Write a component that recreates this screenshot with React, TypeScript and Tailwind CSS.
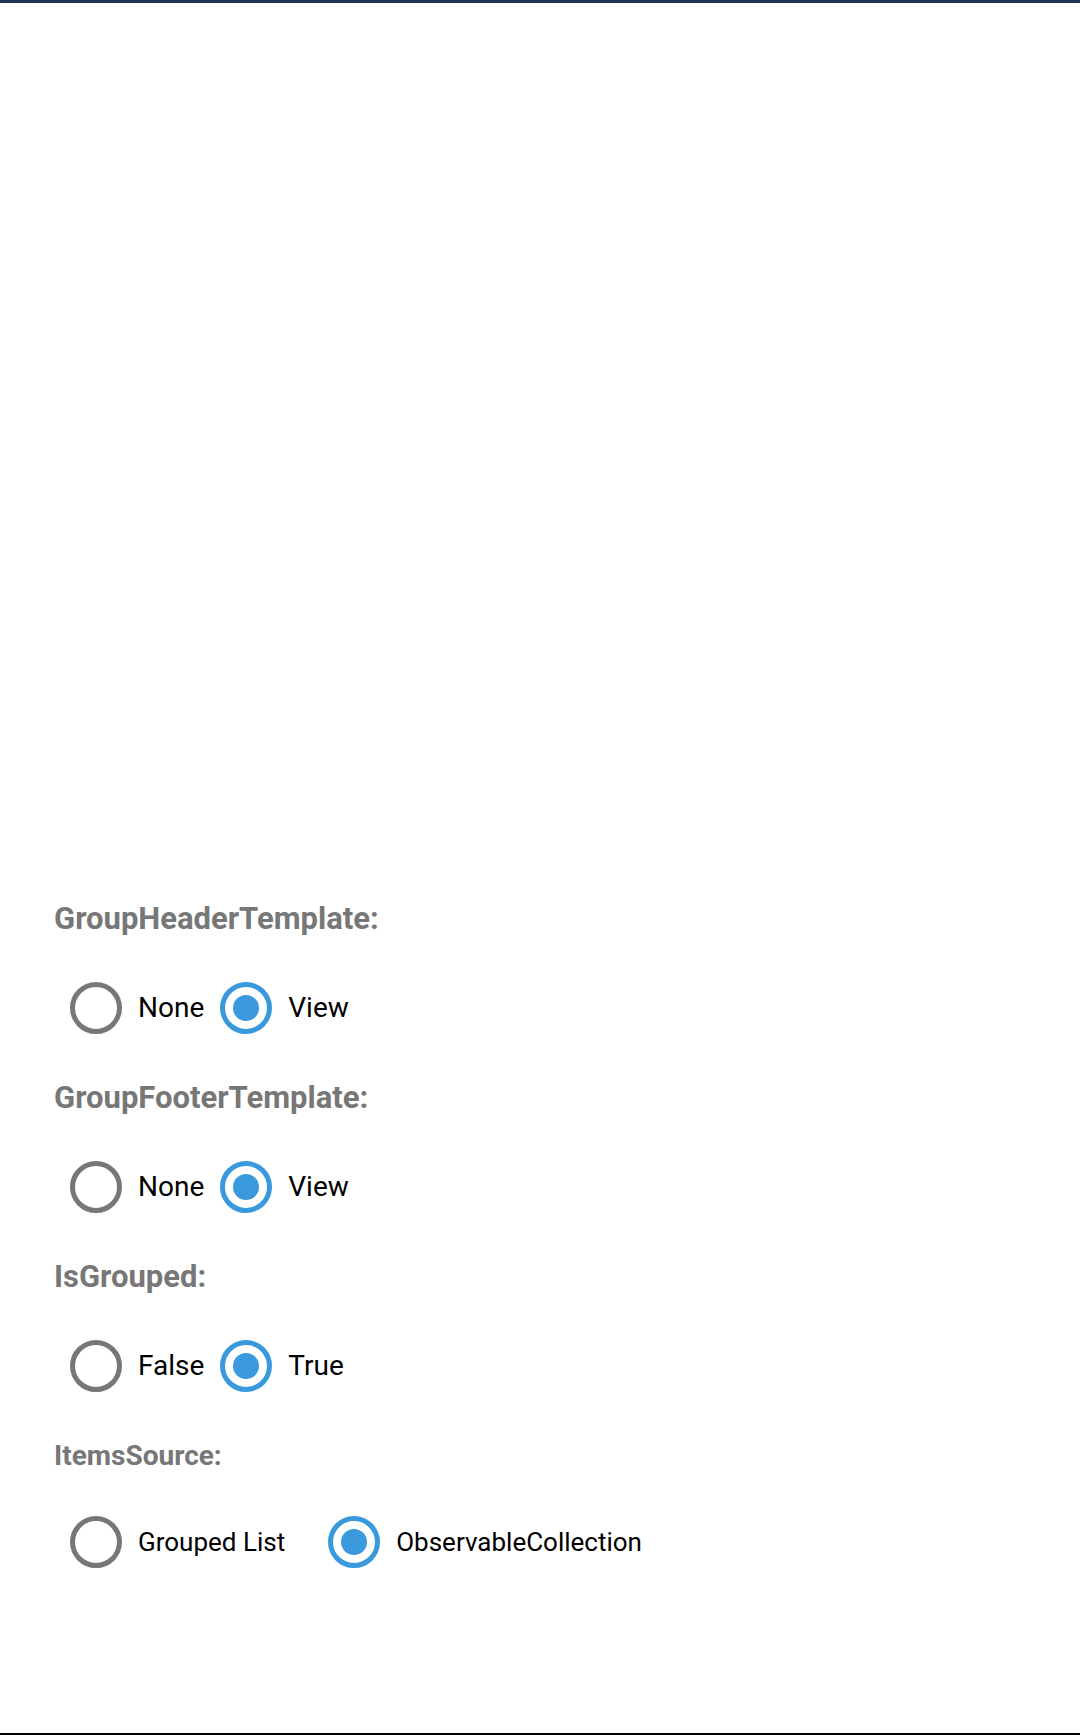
import React, { useState } from 'react';

type Option = { label: string; value: string };

const Radio: React.FC<{ checked: boolean; label: string; onSelect: () => void; small?: boolean; className?: string }> = ({
  checked,
  label,
  onSelect,
  small,
  className,
}) => (
  <button type="button" onClick={onSelect} className={`flex items-center gap-4 ${className ?? ''}`}>
    <span
      className={`h-[52px] w-[52px] rounded-full border-[5px] flex items-center justify-center ${
        checked ? 'border-[#3a99dc]' : 'border-[#777777]'
      }`}
    >
      {checked && <span className="h-[26px] w-[26px] rounded-full bg-[#3a99dc]" />}
    </span>
    <span className={`whitespace-nowrap text-black ${small ? 'text-[26px]' : 'text-[28px]'}`}>{label}</span>
  </button>
);

const Section: React.FC<{
  title: string;
  options: Option[];
  value: string;
  onChange: (v: string) => void;
  small?: boolean;
}> = ({ title, options, value, onChange, small }) => (
  <div className="flex flex-col">
    <div
      className={`h-[40px] flex items-center pl-[54px] font-bold text-[#777777] whitespace-nowrap ${
        small ? 'text-[28px]' : 'text-[31px]'
      }`}
    >
      {title}
    </div>
    <div className={`${small ? 'mt-[36px]' : 'mt-[39px]'} h-[60px] flex items-center pl-[70px]`}>
      {options.map((o, i) => (
        <Radio
          key={o.value}
          label={o.label}
          checked={value === o.value}
          onSelect={() => onChange(o.value)}
          small={small}
          className={i > 0 ? (small ? 'ml-[43px]' : 'ml-4') : ''}
        />
      ))}
    </div>
  </div>
);

const App: React.FC = () => {
  const [header, setHeader] = useState('view');
  const [footer, setFooter] = useState('view');
  const [grouped, setGrouped] = useState('true');
  const [source, setSource] = useState('observable');

  const templateOptions = [
    { label: 'None', value: 'none' },
    { label: 'View', value: 'view' },
  ];

  return (
    <div className="h-[1735px] flex flex-col bg-white font-['Roboto',sans-serif]">
      <div className="h-[3px] bg-[#1c3550]" />
      {/* CollectionView area, empty in the sample */}
      <div className="h-[896px]" />
      <div className="flex flex-col gap-[40px]">
        <Section title="GroupHeaderTemplate:" options={templateOptions} value={header} onChange={setHeader} />
        <Section title="GroupFooterTemplate:" options={templateOptions} value={footer} onChange={setFooter} />
        <Section
          title="IsGrouped:"
          options={[
            { label: 'False', value: 'false' },
            { label: 'True', value: 'true' },
          ]}
          value={grouped}
          onChange={setGrouped}
        />
        <Section
          title="ItemsSource:"
          options={[
            { label: 'Grouped List', value: 'grouped' },
            { label: 'ObservableCollection', value: 'observable' },
          ]}
          value={source}
          onChange={setSource}
          small
        />
      </div>
      <div className="flex-1" />
      <div className="h-[2px] bg-black" />
    </div>
  );
};

export default App;
